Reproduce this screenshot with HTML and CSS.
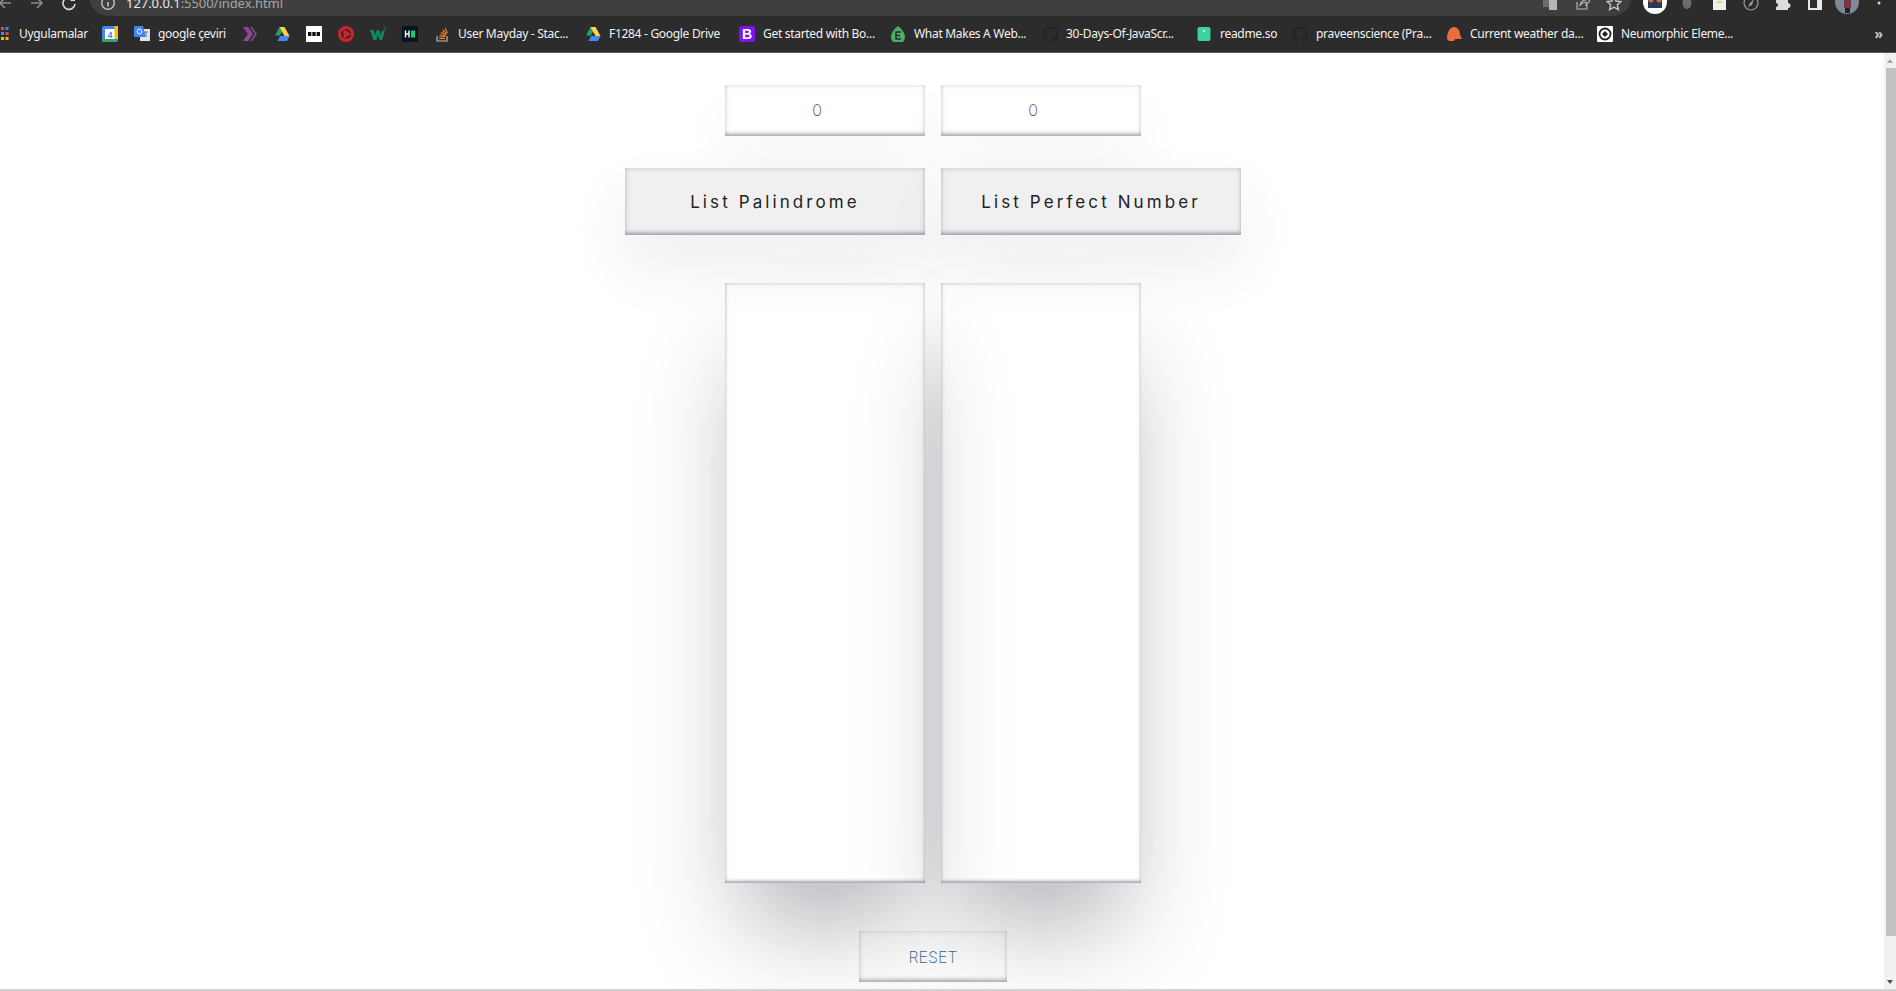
FILE: index.html
```html
<!DOCTYPE html>
<html lang="en">
<head>
    <meta charset="UTF-8">
    <meta name="viewport" content="width=device-width, initial-scale=1.0">
    <title>Palindrome and Perfect Numbers</title>
    <link rel="stylesheet" href="styles.css">
</head>
<body>
    <!-- Browser chrome, the top of it is cut off in the shot -->
    <div class="toolbar">
        <svg class="nav-icon back" viewBox="0 0 16 16"><path d="M14 8H3M8 3 3 8l5 5" stroke="#8a8a8a" stroke-width="1.6" fill="none"/></svg>
        <svg class="nav-icon" viewBox="0 0 16 16"><path d="M2 8h11M8 3l5 5-5 5" stroke="#8a8a8a" stroke-width="1.6" fill="none"/></svg>
        <svg class="nav-icon" viewBox="0 0 16 16"><path d="M13 5A6 6 0 1 0 14 9" stroke="#dcdcdc" stroke-width="1.6" fill="none"/><path d="M14 1v5H9z" fill="#dcdcdc"/></svg>
        <div class="address">
            <svg class="addr-info" viewBox="0 0 16 16"><circle cx="8" cy="8" r="6.3" stroke="#c4c4c4" stroke-width="1.4" fill="none"/><path d="M8 7v4.5" stroke="#c4c4c4" stroke-width="1.6"/></svg>
            <span class="url"><span class="url-host">127.0.0.1</span>:5500/index.html</span>
            <svg class="addr-icon" viewBox="0 0 16 16"><rect x="1" y="2" width="9" height="10" fill="#6d6d6d"/><rect x="7" y="4" width="8" height="11" fill="#b5b5b5"/></svg>
            <svg class="addr-icon" viewBox="0 0 16 16"><path d="M3 7v7h10v-4M6 10c1-4 4-5 6-5V2l4 4-4 4V7c-2 0-4 1-6 3z" stroke="#b5b5b5" stroke-width="1.2" fill="none"/></svg>
            <svg class="addr-icon" viewBox="0 0 16 16"><path d="m8 1.500 2 4.500 5 .5-3.700 3.300 1.100 4.900L8 12.200l-4.400 2.500 1.100-4.900L1 6.500l5-.5z" stroke="#c4c4c4" stroke-width="1.400" fill="none"/></svg>
        </div>
        <div class="ext-group">
            <span class="ext-btn"><svg class="ext-badge" viewBox="0 0 24 24"><circle cx="12" cy="12" r="12" fill="#fff"/><rect x="5" y="9" width="14" height="9" fill="#2a3a5a"/><circle cx="8" cy="10" r="2.500" fill="#e0663a"/><circle cx="16" cy="10" r="2.500" fill="#e0663a"/></svg></span>
            <span class="ext-btn"><svg class="nav-icon flat" viewBox="0 0 16 16"><ellipse cx="8" cy="8" rx="4.500" ry="6" fill="#6b6b6b"/></svg></span>
            <span class="ext-btn"><svg class="nav-icon flat" viewBox="0 0 16 16"><rect x="2" y="1" width="13" height="14" fill="#f2efe4"/><path d="M6 4h5M6 7h5" stroke="#d8a93a" stroke-width="1.200"/></svg></span>
            <span class="ext-btn"><svg class="nav-icon flat" viewBox="0 0 16 16"><circle cx="8" cy="8" r="7" stroke="#9a9a9a" stroke-width="1.200" fill="none"/><path d="M11 4 7 8l-2 4 4-2z" fill="#9a9a9a"/></svg></span>
            <span class="ext-btn"><svg class="nav-icon flat" viewBox="0 0 16 16"><path d="M1 5h4a2 2 0 0 1 4 0h4v3a2 2 0 0 1 0 5v2H1v-3a2 2 0 0 0 0-4z" fill="#dcdcdc"/></svg></span>
            <span class="ext-btn"><svg class="nav-icon flat" viewBox="0 0 16 16"><rect x="1" y="1" width="14" height="14" fill="#e8e8e8"/><rect x="3" y="1" width="7" height="12" fill="#2c2c2c"/></svg></span>
            <span class="ext-btn"><svg class="ext-badge" viewBox="0 0 24 24"><circle cx="12" cy="12" r="12" fill="#7d8a9a"/><rect x="9" y="2" width="7" height="16" fill="#7b3348"/><rect x="10" y="18" width="5" height="5" fill="#222"/></svg></span>
            <span class="ext-btn"><svg class="nav-icon flat" viewBox="0 0 16 16"><circle cx="8" cy="3" r="1.500" fill="#d8d8d8"/><circle cx="8" cy="8" r="1.500" fill="#d8d8d8"/></svg></span>
        </div>
    </div>

    <div class="bookmarks">
        <div class="bm first">
            <svg class="bm-icon" viewBox="0 0 16 16"><rect x="6" y="1" width="3" height="3" fill="#ea4335"/><rect x="10.500" y="1" width="3" height="3" fill="#4285f4"/><rect x="6" y="6" width="3" height="3" fill="#4285f4"/><rect x="10.500" y="6" width="3" height="3" fill="#ea4335"/><rect x="6" y="11" width="3" height="3" fill="#fbbc05"/><rect x="10.500" y="11" width="3" height="3" fill="#fbbc05"/></svg>
            <span class="bm-text w67">Uygulamalar</span>
        </div>
        <svg class="bm-icon" viewBox="0 0 16 16"><rect width="16" height="16" rx="2" fill="#4285f4"/><rect x="3" y="3" width="10" height="10" fill="#fff"/><rect x="12.500" width="3.500" height="13" fill="#fbbc05"/><rect y="13" width="12.500" height="3" fill="#34a853"/><text x="8" y="11.500" class="cal-num">4</text></svg>
        <div class="bm">
            <svg class="bm-icon" viewBox="0 0 16 16"><rect x="6" y="3" width="10" height="12" fill="#e4e4e4"/><path d="M10 6h4M12 6v5" stroke="#777" stroke-width="1"/><path d="M1 0h8l3 11H1a1 1 0 0 1-1-1V1a1 1 0 0 1 1-1z" fill="#4285f4"/><circle cx="5.500" cy="5.500" r="2.300" stroke="#fff" stroke-width="1" fill="none"/></svg>
            <span class="bm-text w68">google çeviri</span>
        </div>
        <svg class="bm-icon" viewBox="0 0 16 16"><path d="M1 1h5l5 7-5 7H1l5-7zM8 1h2l5 7-5 7H8l5-7z" fill="#8d4a91"/></svg>
        <svg class="bm-icon" viewBox="0 0 16 16"><use href="#drive"/></svg>
        <svg class="bm-icon" viewBox="0 0 16 16"><rect width="16" height="16" fill="#fff"/><rect x="2" y="6" width="3.400" height="4" fill="#111"/><rect x="6.300" y="6" width="3.400" height="4" fill="#111"/><rect x="10.600" y="6" width="3.400" height="4" fill="#111"/></svg>
        <svg class="bm-icon" viewBox="0 0 16 16"><circle cx="8" cy="8" r="6.500" stroke="#d2232a" stroke-width="3" fill="none"/><path d="M5.500 3 13 8l-7.500 5z" fill="#d2232a"/></svg>
        <svg class="bm-icon" viewBox="0 0 16 16"><path d="M0 4h3.500l1.500 5 2-5h2l1.500 5 1.300-4H15l-3 9H9.500L8 9l-1.800 5H3.500z" fill="#0f8a5f"/><path d="M13.500 1h2v3h-2" stroke="#0f8a5f" stroke-width=".7" fill="none"/></svg>
        <svg class="bm-icon" viewBox="0 0 16 16"><rect width="16" height="16" fill="#0a1420"/><path d="M3.500 4.500v7M7 4.500v7M3.500 8H7" stroke="#fff" stroke-width="1.400"/><rect x="9" y="4.500" width="4" height="7" fill="#05ce78"/></svg>
        <div class="bm">
            <svg class="bm-icon" viewBox="0 0 16 16"><path d="M3 10v5h10v-5" stroke="#bcbbbb" stroke-width="1.200" fill="none"/><path d="M5 12.500h6M5.200 10.500l5.800.5M5.800 8.500l5.600 1.500M7 6.200l5 2.800M8.700 4l4 4M11 2l2.500 5" stroke="#f48024" stroke-width="1.100"/></svg>
            <span class="bm-text w111">User Mayday - Stac...</span>
        </div>
        <div class="bm">
            <svg class="bm-icon" viewBox="0 0 16 16"><use href="#drive"/></svg>
            <span class="bm-text w114">F1284 - Google Drive</span>
        </div>
        <div class="bm">
            <svg class="bm-icon" viewBox="0 0 16 16"><rect width="16" height="16" rx="2" fill="#7b14f0"/><text x="8" y="13" class="boot-b">B</text></svg>
            <span class="bm-text w111">Get started with Bo...</span>
        </div>
        <div class="bm">
            <svg class="bm-icon" viewBox="0 0 16 16"><path d="M8 0c3 2 7 7 7 11 0 3-2 5-3 5H4c-1 0-3-2-3-5C1 7 5 2 8 0z" fill="#4caf63"/><path d="M11 6H6v7h5M6 9.500h4" stroke="#2b2b2b" stroke-width="1.500" fill="none"/></svg>
            <span class="bm-text w112">What Makes A Web...</span>
        </div>
        <div class="bm">
            <svg class="bm-icon" viewBox="0 0 16 16"><use href="#github"/></svg>
            <span class="bm-text w114">30-Days-Of-JavaScr...</span>
        </div>
        <div class="bm">
            <svg class="bm-icon" viewBox="0 0 16 16"><rect x="1.500" y="1" width="13" height="14" rx="2" fill="#3fd39c"/><circle cx="8" cy="5" r="1.200" fill="#c6f3e2"/></svg>
            <span class="bm-text w56">readme.so</span>
        </div>
        <div class="bm">
            <svg class="bm-icon" viewBox="0 0 16 16"><use href="#github"/></svg>
            <span class="bm-text w114">praveenscience (Pra...</span>
        </div>
        <div class="bm">
            <svg class="bm-icon" viewBox="0 0 16 16"><path d="M1 13C1 6 4 1 8 1s6 4 6 8l2 4H9l-1 2H3z" fill="#e96e3c"/></svg>
            <span class="bm-text w111">Current weather da...</span>
        </div>
        <div class="bm">
            <svg class="bm-icon" viewBox="0 0 16 16"><rect width="16" height="16" rx="1" fill="#fff"/><circle cx="8" cy="8" r="5.500" stroke="#222" stroke-width="1.800" fill="none"/><path d="M8 5 11 8 8 11 5 8z" fill="#222"/></svg>
            <span class="bm-text w110">Neumorphic Eleme...</span>
        </div>
        <span class="bm-more">»</span>
    </div>

    <!-- shared icon shapes -->
    <svg class="defs" aria-hidden="true">
        <defs>
            <g id="drive">
                <path d="M5.500 1h5L6 9.500H1z" fill="#1fa463"/>
                <path d="M10.500 1 15.500 10h-5L5.500 1z" fill="#ffd04b"/>
                <path d="M3.500 15 6 10h9.500L13 15z" fill="#4688f1"/>
            </g>
            <path id="github" d="M8 0a8 8 0 0 0-2.500 15.600V13c-2 .4-2.600-1-2.800-1.600-.4-.7-1.200-1-.2-1 .8 0 1.300.8 1.500 1.100.9 1.500 2.200 1 2.700.8 0-.6.300-1.100.6-1.300-2-.2-3.900-1-3.900-4.300 0-1 .3-1.700.9-2.300-.1-.2-.4-1.100.1-2.200 0 0 .7-.2 2.300.9a8 8 0 0 1 4.200 0c1.600-1.100 2.300-.9 2.300-.9.500 1.100.2 2 .1 2.200.6.600.9 1.300.9 2.300 0 3.300-2 4.100-3.900 4.300.3.300.6.800.6 1.500v3.500A8 8 0 0 0 8 0z" fill="#20262c"/>
        </defs>
    </svg>

    <div class="window">
        <main class="page">
            <div class="row">
                <div class="box value">0</div>
                <div class="box value">0</div>
            </div>
            <div class="row">
                <button class="box action">List Palindrome</button>
                <button class="box action">List Perfect Number</button>
            </div>
            <div class="row lists">
                <ul class="box list"></ul>
                <ul class="box list"></ul>
            </div>
            <button class="box reset">RESET</button>
        </main>
        <div class="scrollbar">
            <span class="arrow-up"></span>
            <span class="thumb"></span>
            <span class="arrow-down"></span>
        </div>
    </div>
    <div class="edge"></div>
</body>
</html>
```

FILE: styles.css
```css
* {margin: 0; padding: 0; box-sizing: border-box;}

html, body {
    height: 100%;
}
body {
    display: flex;
    flex-direction: column;
    overflow: hidden;
    background-color: #fff;
    font-family: "Inter", "Liberation Sans", sans-serif;
}

/* browser chrome */
.toolbar {
    display: flex;
    align-items: flex-end;
    gap: 16px;
    height: 16px;
    flex: none;
    overflow: hidden;
    background-color: #2c2c2c;
}
.nav-icon {
    width: 16px;
    height: 16px;
    flex: none;
    margin-bottom: 5px;
}
.nav-icon.back {
    margin-left: -3px;
}
.nav-icon.flat {
    margin-bottom: 0;
}
.address {
    display: flex;
    align-items: flex-end;
    gap: 16px;
    width: 1543px;
    height: 40px;
    flex: none;
    margin-left: -4px;
    padding: 0 10px 5px 11px;
    background-color: #3f3f3f;
    border-radius: 0 0 20px 20px;
}
.addr-info, .addr-icon {
    width: 16px;
    height: 16px;
    flex: none;
}
.addr-info {
    margin-right: -6px;
}
.url {
    flex: 1;
    font: 13px/16px "Noto Sans", sans-serif;
    letter-spacing: -0.05px;
    color: #a6a6a6;
}
.url-host {
    color: #e8e8e8;
}
.ext-group {
    display: flex;
    align-items: flex-end;
    flex: none;
    margin-left: -9px;
}
.ext-btn {
    display: flex;
    justify-content: center;
    align-items: flex-end;
    width: 32px;
    height: 16px;
    padding-bottom: 5px;
}
.ext-badge {
    width: 24px;
    height: 24px;
    flex: none;
    margin-bottom: -3px;
}

.bookmarks {
    display: flex;
    align-items: center;
    gap: 16px;
    height: 37px;
    flex: none;
    padding-bottom: 1px;
    background-color: #2c2c2c;
    border-bottom: 1px solid #5a5a5a;
}
.bm {
    display: flex;
    align-items: center;
    gap: 8px;
    flex: none;
}
.bm.first {
    margin-left: -5px;
}
.bm-icon {
    width: 16px;
    height: 16px;
    flex: none;
}
.bm-text {
    font: 12px/16px "Noto Sans", sans-serif;
    letter-spacing: -0.3px;
    color: #f2f2f2;
    white-space: nowrap;
}
.w56 {width: 56px;}
.w67 {width: 67px;}
.w68 {width: 68px;}
.w110 {width: 110px;}
.w111 {width: 111px;}
.w112 {width: 112px;}
.w114 {width: 114px;}
.bm-more {
    margin-left: auto;
    margin-right: 13px;
    font: bold 14px/16px "Noto Sans", sans-serif;
    color: #c8c8c8;
}
.cal-num {
    font: bold 9px "Liberation Sans", sans-serif;
    fill: #4285f4;
    text-anchor: middle;
}
.boot-b {
    font: bold 14px "Liberation Sans", sans-serif;
    fill: #fff;
    text-anchor: middle;
}
.defs {
    position: absolute;
    width: 0;
    height: 0;
}

/* the page itself */
.window {
    display: flex;
    flex: 1;
    min-height: 0;
}
.page {
    flex: 1;
    display: flex;
    flex-direction: column;
    align-items: center;
    overflow: hidden;
    padding: 32px 18px 0 0;
}
.row {
    display: flex;
    gap: 16px;
    margin-bottom: 32px;
}
.row.lists {
    margin-top: 16px;
    margin-bottom: 48px;
}
.box {
    border: none;
    background-color: transparent;
    list-style: none;
    font-family: inherit;
}
.value {
    width: 200px;
    height: 51px;
    padding-right: 16px;
    text-align: center;
    font-size: 16px;
    font-weight: 200;
    line-height: 50px;
    color: #444;
    box-shadow: inset 0 -4px 4px -2px rgba(140, 145, 158, .8), inset 0 0 5px rgba(140, 145, 158, .4), 0 30px 60px rgba(50, 55, 80, .045);
}
.action {
    width: 300px;
    height: 67px;
    font-size: 17px;
    letter-spacing: 3.1px;
    color: #222;
    background-color: #f0f0f1;
    box-shadow: inset 0 -4px 4px -2px rgba(140, 145, 158, .85), inset 0 0 5px rgba(140, 145, 158, .5), 0 30px 60px rgba(50, 50, 70, .09);
}
.list {
    width: 200px;
    height: 600px;
    box-shadow: inset 0 -3px 3px -1px rgba(140, 145, 158, .7), inset 0 0 4px rgba(140, 145, 158, .6), 0 60px 100px -20px rgba(40, 38, 55, .36);
}
.reset {
    width: 148px;
    height: 51px;
    font-size: 16px;
    font-weight: 200;
    color: #3f5f8a;
    box-shadow: inset 0 -4px 4px -2px rgba(140, 145, 158, .8), inset 0 0 5px rgba(140, 145, 158, .4);
}

/* scrollbar, drawn since the page doesn't really overflow here */
.scrollbar {
    display: flex;
    flex-direction: column;
    align-items: flex-end;
    width: 12px;
    flex: none;
    background-color: #f1f1f1;
}
.arrow-up, .arrow-down {
    width: 0;
    height: 0;
    margin: 6px 3px 5px 0;
    border-left: 3.500px solid transparent;
    border-right: 3.500px solid transparent;
}
.arrow-up {
    border-bottom: 4px solid #a3a3a3;
}
.arrow-down {
    margin-top: auto;
    border-top: 4px solid #505050;
}
.thumb {
    width: 10px;
    height: 868px;
    background-color: #c1c1c1;
}
.edge {
    height: 2px;
    flex: none;
    background-color: #d2d2d2;
}
```
